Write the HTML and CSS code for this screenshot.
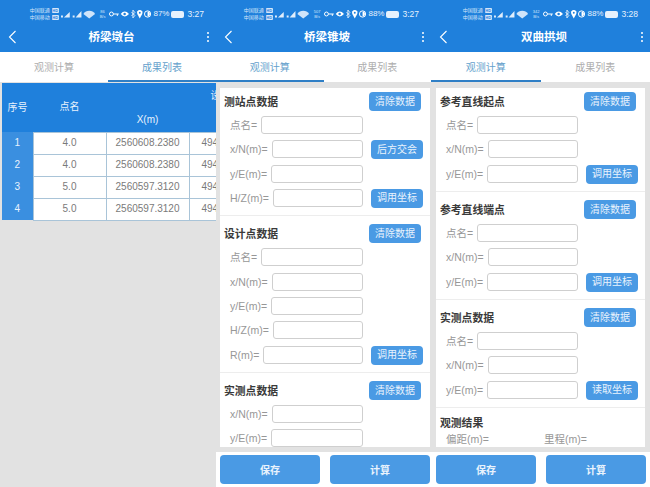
FILE: index.html
```html
<!DOCTYPE html>
<html lang="zh">
<head>
    <meta charset="UTF-8">
    <title>桥梁放样</title>
    <link rel="stylesheet" href="styles.css">
</head>
<body>
    <div class="phone first">
        <div class="appbar">
            <div class="status">
                <div class="carrier"><span>中国联通</span><span>中国移动</span></div>
                <div class="hd"><b>HD</b><b>HD</b></div>
                <svg class="signal" viewBox="0 0 38 10"><path d="M0 8.500H2V6.500H0Z M3 8.500L9 3V8.500Z M12 8.500H14V6.500H12Z M15 8.500L21 2V8.500Z" fill="#e0edfb"/><path d="M23 5A7 7 0 0 1 35 5L29 9.500Z" fill="#cfe4fa"/></svg>
                <span class="speed">86<br>B/s</span>
                <svg class="icons" viewBox="0 0 43 10"><circle cx="2.500" cy="5" r="2" fill="none" stroke="#fff"/><path d="M4.500 5H10M8.500 5V7" stroke="#fff"/><path d="M12 5Q16 0 20.500 5Q16 10 12 5Z" fill="#fff"/><circle cx="16" cy="5" r="1.300" fill="#1f80dc"/><path d="M23 3L26.500 6.500 24.500 9V1L26.500 3.500 23 7" fill="none" stroke="#fff" stroke-width=".8"/><path d="M31.500 9.500L29 5A2.800 2.800 0 1 1 34 5Z" fill="#fff"/><circle cx="31.500" cy="3.800" r="1" fill="#1f80dc"/><circle cx="39.500" cy="5" r="3.200" fill="none" stroke="#fff"/><path d="M39.500 2.500A2.500 2.500 0 0 1 39.500 7.500Z" fill="#fff"/></svg>
                <span class="pct">87%</span>
                <span class="battery"></span>
                <span class="time">3:27</span>
            </div>
            <div class="titlebar">
                <svg class="back" viewBox="0 0 10 16"><path d="M7.500 2L1.500 8L7.500 14" fill="none" stroke="#fff" stroke-width="1.100"/></svg>
                <span class="title">桥梁墩台</span>
                <span class="more"><i></i><i></i><i></i></span>
            </div>
        </div>
        <div class="tabs">
            <span class="tab">观测计算</span>
            <span class="tab active">成果列表</span>
        </div>
        <div class="table-wrap">
            <table class="result">
                <colgroup><col class="c-no"><col class="c-name"><col class="c-val"><col class="c-val"><col class="c-val"></colgroup>
                <thead>
                    <tr class="group"><th rowspan="2">序号</th><th rowspan="2">点名</th><th colspan="3">设计坐标</th></tr>
                    <tr class="sub"><th>X(m)</th><th>Y(m)</th><th>H(m)</th></tr>
                </thead>
                <tbody>
                    <tr><td class="no">1</td><td>4.0</td><td>2560608.2380</td><td class="y">494120.1230</td><td>12.000</td></tr>
                    <tr><td class="no">2</td><td>4.0</td><td>2560608.2380</td><td class="y">494120.1230</td><td>12.000</td></tr>
                    <tr><td class="no">3</td><td>5.0</td><td>2560597.3120</td><td class="y">494131.0490</td><td>12.000</td></tr>
                    <tr><td class="no">4</td><td>5.0</td><td>2560597.3120</td><td class="y">494131.0490</td><td>12.000</td></tr>
                </tbody>
            </table>
        </div>
    </div>

    <div class="phone second">
        <div class="appbar">
            <div class="status">
                <div class="carrier"><span>中国联通</span><span>中国移动</span></div>
                <div class="hd"><b>HD</b><b>HD</b></div>
                <svg class="signal" viewBox="0 0 38 10"><path d="M0 8.500H2V6.500H0Z M3 8.500L9 3V8.500Z M12 8.500H14V6.500H12Z M15 8.500L21 2V8.500Z" fill="#e0edfb"/><path d="M23 5A7 7 0 0 1 35 5L29 9.500Z" fill="#cfe4fa"/></svg>
                <span class="speed">507<br>B/s</span>
                <svg class="icons" viewBox="0 0 43 10"><circle cx="2.500" cy="5" r="2" fill="none" stroke="#fff"/><path d="M4.500 5H10M8.500 5V7" stroke="#fff"/><path d="M12 5Q16 0 20.500 5Q16 10 12 5Z" fill="#fff"/><circle cx="16" cy="5" r="1.300" fill="#1f80dc"/><path d="M23 3L26.500 6.500 24.500 9V1L26.500 3.500 23 7" fill="none" stroke="#fff" stroke-width=".8"/><path d="M31.500 9.500L29 5A2.800 2.800 0 1 1 34 5Z" fill="#fff"/><circle cx="31.500" cy="3.800" r="1" fill="#1f80dc"/><circle cx="39.500" cy="5" r="3.200" fill="none" stroke="#fff"/><path d="M39.500 2.500A2.500 2.500 0 0 1 39.500 7.500Z" fill="#fff"/></svg>
                <span class="pct">88%</span>
                <span class="battery"></span>
                <span class="time">3:27</span>
            </div>
            <div class="titlebar">
                <svg class="back" viewBox="0 0 10 16"><path d="M7.500 2L1.500 8L7.500 14" fill="none" stroke="#fff" stroke-width="1.100"/></svg>
                <span class="title">桥梁锥坡</span>
                <span class="more"><i></i><i></i><i></i></span>
            </div>
        </div>
        <div class="tabs">
            <span class="tab active">观测计算</span>
            <span class="tab">成果列表</span>
        </div>
        <div class="body">
            <div class="panel">
                <section class="block">
                    <div class="block-head"><h2>测站点数据</h2><button class="btn">清除数据</button></div>
                    <div class="row"><label>点名=</label><span class="input"></span></div>
                    <div class="row"><label>x/N(m)=</label><span class="input"></span><button class="btn">后方交会</button></div>
                    <div class="row"><label>y/E(m)=</label><span class="input"></span></div>
                    <div class="row"><label>H/Z(m)=</label><span class="input"></span><button class="btn">调用坐标</button></div>
                </section>
                <section class="block">
                    <div class="block-head"><h2>设计点数据</h2><button class="btn">清除数据</button></div>
                    <div class="row"><label>点名=</label><span class="input"></span></div>
                    <div class="row"><label>x/N(m)=</label><span class="input"></span></div>
                    <div class="row"><label>y/E(m)=</label><span class="input"></span></div>
                    <div class="row"><label>H/Z(m)=</label><span class="input"></span></div>
                    <div class="row"><label>R(m)=</label><span class="input"></span><button class="btn">调用坐标</button></div>
                </section>
                <section class="block">
                    <div class="block-head"><h2>实测点数据</h2><button class="btn">清除数据</button></div>
                    <div class="row"><label>x/N(m)=</label><span class="input"></span></div>
                    <div class="row"><label>y/E(m)=</label><span class="input"></span></div>
                </section>
            </div>
        </div>
        <div class="footer">
            <button class="action">保存</button>
            <button class="action">计算</button>
        </div>
    </div>

    <div class="phone third">
        <div class="appbar">
            <div class="status">
                <div class="carrier"><span>中国联通</span><span>中国移动</span></div>
                <div class="hd"><b>HD</b><b>HD</b></div>
                <svg class="signal" viewBox="0 0 38 10"><path d="M0 8.500H2V6.500H0Z M3 8.500L9 3V8.500Z M12 8.500H14V6.500H12Z M15 8.500L21 2V8.500Z" fill="#e0edfb"/><path d="M23 5A7 7 0 0 1 35 5L29 9.500Z" fill="#cfe4fa"/></svg>
                <span class="speed">342<br>B/s</span>
                <svg class="icons" viewBox="0 0 43 10"><circle cx="2.500" cy="5" r="2" fill="none" stroke="#fff"/><path d="M4.500 5H10M8.500 5V7" stroke="#fff"/><path d="M12 5Q16 0 20.500 5Q16 10 12 5Z" fill="#fff"/><circle cx="16" cy="5" r="1.300" fill="#1f80dc"/><path d="M23 3L26.500 6.500 24.500 9V1L26.500 3.500 23 7" fill="none" stroke="#fff" stroke-width=".8"/><path d="M31.500 9.500L29 5A2.800 2.800 0 1 1 34 5Z" fill="#fff"/><circle cx="31.500" cy="3.800" r="1" fill="#1f80dc"/><circle cx="39.500" cy="5" r="3.200" fill="none" stroke="#fff"/><path d="M39.500 2.500A2.500 2.500 0 0 1 39.500 7.500Z" fill="#fff"/></svg>
                <span class="pct">88%</span>
                <span class="battery"></span>
                <span class="time">3:28</span>
            </div>
            <div class="titlebar">
                <svg class="back" viewBox="0 0 10 16"><path d="M7.500 2L1.500 8L7.500 14" fill="none" stroke="#fff" stroke-width="1.100"/></svg>
                <span class="title">双曲拱坝</span>
                <span class="more"><i></i><i></i><i></i></span>
            </div>
        </div>
        <div class="tabs">
            <span class="tab active">观测计算</span>
            <span class="tab">成果列表</span>
        </div>
        <div class="body">
            <div class="panel">
                <section class="block">
                    <div class="block-head"><h2>参考直线起点</h2><button class="btn">清除数据</button></div>
                    <div class="row"><label>点名=</label><span class="input"></span></div>
                    <div class="row"><label>x/N(m)=</label><span class="input"></span></div>
                    <div class="row"><label>y/E(m)=</label><span class="input"></span><button class="btn">调用坐标</button></div>
                </section>
                <section class="block">
                    <div class="block-head"><h2>参考直线端点</h2><button class="btn">清除数据</button></div>
                    <div class="row"><label>点名=</label><span class="input"></span></div>
                    <div class="row"><label>x/N(m)=</label><span class="input"></span></div>
                    <div class="row"><label>y/E(m)=</label><span class="input"></span><button class="btn">调用坐标</button></div>
                </section>
                <section class="block">
                    <div class="block-head"><h2>实测点数据</h2><button class="btn">清除数据</button></div>
                    <div class="row"><label>点名=</label><span class="input"></span></div>
                    <div class="row"><label>x/N(m)=</label><span class="input"></span></div>
                    <div class="row"><label>y/E(m)=</label><span class="input"></span><button class="btn">读取坐标</button></div>
                </section>
                <section class="block">
                    <div class="block-head result-head"><h2>观测结果</h2></div>
                    <div class="outcome"><label>偏距(m)=</label><label>里程(m)=</label></div>
                </section>
            </div>
        </div>
        <div class="footer">
            <button class="action">保存</button>
            <button class="action">计算</button>
        </div>
    </div>
</body>
</html>
```

FILE: styles.css
```css
* {
    box-sizing: border-box;
}

html, body {
    margin: 0;
    height: 100%;
}

body {
    display: flex;
    width: 650px;
    height: 487px;
    overflow: hidden;
    background-color: #fff;
    font-family: "Liberation Sans", "Noto Sans CJK SC", sans-serif;
}

.phone {
    display: flex;
    flex-direction: column;
    height: 487px;
    overflow: hidden;
    background-color: #e2e2e2;
}

.first {
    width: 216px;
}

.second {
    width: 215px;
}

.third {
    width: 219px;
}

/* blue header */
.appbar {
    height: 52px;
    background-color: #1f80dc;
    color: #fff;
    flex-shrink: 0;
}

.status {
    display: flex;
    justify-content: flex-end;
    align-items: center;
    gap: 2px;
    height: 26px;
    padding: 2px 12px 0 0;
}

.carrier {
    display: flex;
    flex-direction: column;
    font-size: 5px;
    line-height: 7px;
    color: #d4e6fa;
}

.hd {
    display: flex;
    flex-direction: column;
    gap: 2px;
}

.hd b {
    width: 7px;
    height: 5px;
    border-radius: 1px;
    background-color: #d4e6fa;
    color: #1f80dc;
    font-size: 4px;
    line-height: 5px;
    text-align: center;
}

.signal {
    width: 37px;
    height: 10px;
}

.speed {
    font-size: 4px;
    line-height: 5px;
    text-align: center;
    color: #d4e6fa;
}

.icons {
    width: 42px;
    height: 10px;
    margin-left: 2px;
}

.pct, .time {
    font-size: 8px;
    line-height: 10px;
    color: #e6f1fd;
}

.battery {
    width: 13px;
    height: 7px;
    border-radius: 2px;
    background-color: #e6f1fd;
}

.time {
    margin-left: 1px;
    font-size: 8.500px;
}

.titlebar {
    display: flex;
    align-items: center;
    height: 24px;
    padding: 0 6px 2px 8px;
}

.back {
    width: 10px;
    height: 16px;
}

.title {
    flex: 1;
    text-align: center;
    font-size: 11.500px;
    line-height: 16px;
    font-weight: bold;
    padding-right: 2px;
}

.more {
    display: flex;
    flex-direction: column;
    gap: 2px;
    width: 3px;
}

.more i {
    width: 2px;
    height: 2px;
    border-radius: 1px;
    background-color: #fff;
}

/* tabs */
.tabs {
    display: flex;
    height: 30px;
    background-color: #fff;
    flex-shrink: 0;
}

.tab {
    flex: 1;
    text-align: center;
    font-size: 10px;
    line-height: 32px;
    height: 30px;
    color: #adadad;
    border-bottom: 2px solid transparent;
}

.tab.active {
    color: #659fcc;
    border-bottom-color: #2f7fc6;
}

/* results table */
.table-wrap {
    margin: 1px 0 0 2px;
    overflow: hidden;
}

.result {
    border-collapse: collapse;
    table-layout: fixed;
    width: 353px;
    font-size: 10px;
}

.c-no {
    width: 31px;
}

.c-name {
    width: 73px;
}

.c-val {
    width: 83px;
}

.result th {
    background-color: #1f80dc;
    color: #e8f2fd;
    font-weight: normal;
    font-size: 10px;
    line-height: 12px;
    padding: 0;
}

.result .group {
    height: 25px;
}

.result .sub {
    height: 24px;
}

.result td {
    height: 22px;
    padding: 0;
    background-color: #fff;
    color: #7a7a7a;
    text-align: center;
    line-height: 12px;
    border: 1px solid #a9c4d8;
}

.result td.no {
    background-color: #3a8fe0;
    color: #e8f2fd;
    border: 0;
}

.result td.y {
    text-align: left;
    padding-left: 12px;
}

/* form pages */
.body {
    flex: 1;
    min-height: 0;
    overflow: hidden;
    padding: 6px 1px 0 4px;
}

.third .body {
    padding: 6px 5px 0 5px;
}

.panel {
    height: 359px;
    overflow: hidden;
    background-color: #fff;
}

.block {
    padding: 8px 8px 8.500px 4px;
    border-bottom: 1px solid #ededed;
}

.block:first-child {
    padding-top: 4px;
}

.block-head {
    display: flex;
    justify-content: space-between;
    align-items: center;
    height: 19px;
    margin-bottom: 5px;
}

.block-head .btn {
    margin-right: 1px;
}

h2 {
    margin: 0;
    font-size: 10.800px;
    line-height: 14px;
    font-weight: bold;
    color: #3a3a3a;
}

.row {
    display: flex;
    align-items: center;
    height: 18px;
    margin-bottom: 6.300px;
    padding-left: 6px;
    position: relative;
}

.row:last-child {
    margin-bottom: 0;
}

.row label, .outcome label {
    font-size: 10.500px;
    line-height: 14px;
    color: #979797;
    white-space: nowrap;
    margin-right: 4px;
    flex-shrink: 0;
}

.input {
    flex: 1;
    height: 18px;
    margin-right: 59px;
    border: 1px solid #cfcfcf;
    border-radius: 3px;
    background-color: #fff;
}

.btn {
    width: 52px;
    height: 19px;
    padding: 0;
    border: 0;
    border-radius: 4px;
    background-color: #4a9ae4;
    color: #e9f3fd;
    font-family: inherit;
    font-size: 10px;
    line-height: 14px;
}

.row .btn {
    position: absolute;
    right: -1px;
    top: 0;
}

.result-head {
    margin-bottom: 3px;
    height: 13px;
}

.outcome {
    display: flex;
    padding-left: 6px;
    height: 14px;
    align-items: center;
}

.outcome label {
    width: 98px;
    margin: 0;
}

/* bottom buttons */
.footer {
    display: flex;
    gap: 10px;
    height: 35px;
    margin-top: 5px;
    padding: 3px 0 3px 4px;
    background-color: #fff;
    flex-shrink: 0;
}

.third .footer {
    padding-left: 5px;
}

.action {
    width: 100px;
    height: 29px;
    border: 0;
    border-radius: 4px;
    background-color: #4a9ae4;
    color: #e9f3fd;
    font-family: inherit;
    font-size: 10px;
    font-weight: bold;
}
```
